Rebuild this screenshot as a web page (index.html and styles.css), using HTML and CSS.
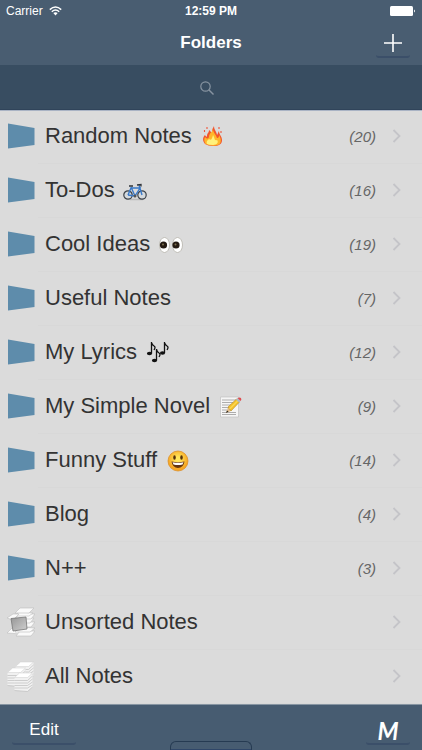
FILE: index.html
```html
<!DOCTYPE html>
<html lang="en">
<head>
  <meta charset="UTF-8">
  <meta name="viewport" content="width=device-width, initial-scale=1.0">
  <title>Folders</title>
  <link rel="stylesheet" href="styles.css">
</head>
<body>
  <!-- shared icons -->
  <svg class="defs" width="0" height="0" aria-hidden="true">
    <symbol id="folder" viewBox="0 0 28 28">
      <path d="M1 1.5 L27.5 6 V23 L1 26.5Z" fill="#5e8cab"/>
    </symbol>
    <symbol id="chevron" viewBox="0 0 10 16">
      <path d="M1.5 2 L7.5 8 L1.5 14" fill="none" stroke="#c4c4c8" stroke-width="1.8"/>
    </symbol>
    <symbol id="sheets" viewBox="0 0 19 20">
      <path d="M.5 5 V18.500 L13.500 19.500 L18.500 15 V1Z" fill="#f1f1f1"/>
      <path d="M.5 8.500H13.500L18.500 4M.5 11H13.500L18.500 7M.5 13.500H13.500L18.500 10M.5 16H13.500L18.500 13M.5 18.500L13.500 19.500L18.500 15" fill="none" stroke="#bdbdbd" stroke-width=".7"/>
      <path d="M5.500 1H18.500L13.500 5.500H.5Z" fill="#fff" stroke="#cfcfcf" stroke-width=".5"/>
    </symbol>
  </svg>

  <div class="app">
    <header class="header">
      <div class="status">
        <div class="carrier">
          Carrier
          <svg width="13" height="10" viewBox="0 0 13 10">
            <path d="M.8 3.600Q6.500 -1.600 12.200 3.600M2.800 5.700Q6.500 2.300 10.200 5.700" fill="none" stroke="#fff" stroke-width="1.500"/>
            <path d="M4.300 7.100Q6.500 5.200 8.700 7.100L6.500 9.500Z" fill="#fff"/>
          </svg>
        </div>
        <div class="time">12:59 PM</div>
        <svg class="battery" width="26" height="10" viewBox="0 0 26 10">
          <rect width="23" height="10" rx="1.500" fill="#fff"/>
          <path d="M24 3.500Q26 5 24 6.500Z" fill="#fff"/>
        </svg>
      </div>
      <div class="nav">
        <h1>Folders</h1>
        <button class="bar-button add" aria-label="Add folder">
          <svg width="18" height="18" viewBox="0 0 18 18"><path d="M9 0V18M0 9H18" stroke="#fff" stroke-width="1.600"/></svg>
        </button>
      </div>
    </header>

    <label class="search">
      <input type="search" aria-label="Search">
      <svg width="14" height="14" viewBox="0 0 14 14"><circle cx="5.500" cy="5.500" r="4.700" fill="none" stroke="#8794a1" stroke-width="1.200"/><path d="M9 9L13.500 13.500" stroke="#8794a1" stroke-width="1.400"/></svg>
    </label>

    <ul class="folders">
      <li><a href="#">
        <svg class="icon"><use href="#folder"/></svg>
        <span class="name">Random Notes
          <svg class="emoji" viewBox="0 0 26 26">
            <path d="M5 21C2 17 3 14 5 12C6 14 7 14 7 13C7 10 9 10 9 7C11 8 11 10 12 10C12 6 13 5 14 3C14 7 17 9 17 12C18 11 18 9 19 8C19 12 22 13 22 17C22 21 19 23 13 23Q8 23 5 21Z" fill="#f2552c"/>
            <path d="M5.500 21C4 18 4 16 5 14C7 16 8 16 9 14C9 10 12 10 13 6C13 10 16 11 17 15C19 15 19 13 19 12C22 17 21 21 18 22Q12 24 5.500 21Z" fill="#ffb62a"/>
            <path d="M7 21C6 18 8 17 9 16C11 18 12 16 13 12C15 15 14 18 17 17C19 19 17 22 13 22Q9 22 7 21Z" fill="#fff27c"/>
            <path d="M4.500 7V9M7 4V6M19 4V6M21 8V10" stroke="#ef563b" stroke-width="1.100"/>
          </svg>
        </span>
        <span class="count">(20)</span>
        <svg class="chevron"><use href="#chevron"/></svg>
      </a></li>
      <li><a href="#">
        <svg class="icon"><use href="#folder"/></svg>
        <span class="name">To-Dos
          <svg class="emoji" viewBox="0 0 26 26">
            <path d="M7 22.500H20" stroke="#bbb" stroke-width="1.500"/>
            <g fill="#d5dade" stroke="#3b4148" stroke-width="1.200"><circle cx="5" cy="18" r="4.200"/><circle cx="19" cy="18" r="4.200"/></g>
            <path d="M5 18L8 11H17L12 19L8 10M5 18L12 19M19 18L16 8" fill="none" stroke="#3979c9" stroke-width="1.400"/>
            <path d="M6 9H10M14 8L18 7.500V9.500" fill="none" stroke="#30343a" stroke-width="1.300"/>
            <circle cx="12" cy="19" r="1.500" fill="#555"/>
          </svg>
        </span>
        <span class="count">(16)</span>
        <svg class="chevron"><use href="#chevron"/></svg>
      </a></li>
      <li><a href="#">
        <svg class="icon"><use href="#folder"/></svg>
        <span class="name">Cool Ideas
          <svg class="emoji" viewBox="0 0 26 26">
            <g fill="#fff" stroke="#b5b2aa" stroke-width=".8"><ellipse cx="6.500" cy="14" rx="5" ry="7.500"/><ellipse cx="19.500" cy="14" rx="5" ry="7.500"/></g>
            <g fill="#241a12"><circle cx="5.500" cy="14" r="3.600"/><circle cx="18" cy="14" r="3.600"/></g>
            <g fill="#7d7150"><circle cx="5" cy="13.500" r="1"/><circle cx="17.500" cy="13.500" r="1"/></g>
          </svg>
        </span>
        <span class="count">(19)</span>
        <svg class="chevron"><use href="#chevron"/></svg>
      </a></li>
      <li><a href="#">
        <svg class="icon"><use href="#folder"/></svg>
        <span class="name">Useful Notes</span>
        <span class="count">(7)</span>
        <svg class="chevron"><use href="#chevron"/></svg>
      </a></li>
      <li><a href="#">
        <svg class="icon"><use href="#folder"/></svg>
        <span class="name">My Lyrics
          <svg class="emoji" viewBox="0 0 26 26">
            <g fill="#111"><ellipse cx="4.500" cy="14.500" rx="2.600" ry="1.800"/><ellipse cx="9.500" cy="21.500" rx="2.600" ry="1.800"/><ellipse cx="17.500" cy="14" rx="2.600" ry="1.800"/></g>
            <path d="M6.500 14.500V3Q7 6 9 7T9 11M11.500 21.500V10Q12 13 14 14T14 18M19.500 14V3Q20 6 22 7T22 11" fill="none" stroke="#111" stroke-width="1.300"/>
          </svg>
        </span>
        <span class="count">(12)</span>
        <svg class="chevron"><use href="#chevron"/></svg>
      </a></li>
      <li><a href="#">
        <svg class="icon"><use href="#folder"/></svg>
        <span class="name">My Simple Novel
          <svg class="emoji" viewBox="0 0 26 26">
            <path d="M2.500 4H20.500V24H2.500Z" fill="#f6f6f6" stroke="#c2c2c2" stroke-width=".7"/>
            <path d="M4 7H18M4 9.500H17M4 12H14M4 14.500H12M4 17H9M4 19.500H18M4 21.500H18" stroke="#a5a5a5" stroke-width=".9"/>
            <path d="M8 20L10 14L13 18Z" fill="#e3bd8a"/><path d="M8 20L9 17.500L10.500 18.800Z" fill="#222"/>
            <path d="M10 14L18.500 6L21.500 9L13 18Z" fill="#f5c32c" stroke="#a77b13" stroke-width=".5"/>
            <path d="M11.500 16L20 7.500" stroke="#ffe76a"/>
            <path d="M18 6.500L19.500 5L22.500 8L21 9.500Z" fill="#aebbc4"/>
            <path d="M19.500 5Q21.500 4 23 5Q24 7 22.500 8Z" fill="#df4d50"/>
          </svg>
        </span>
        <span class="count">(9)</span>
        <svg class="chevron"><use href="#chevron"/></svg>
      </a></li>
      <li><a href="#">
        <svg class="icon"><use href="#folder"/></svg>
        <span class="name">Funny Stuff
          <svg class="emoji" viewBox="0 0 26 26">
            <defs><radialGradient id="face" cy=".4"><stop offset=".2" stop-color="#ffe65c"/><stop offset="1" stop-color="#f6a623"/></radialGradient></defs>
            <circle cx="13" cy="14" r="10" fill="url(#face)" stroke="#db8b20" stroke-width=".7"/>
            <ellipse cx="9.500" cy="10.500" rx="1.300" ry="2.300" fill="#56320d"/><ellipse cx="16.500" cy="10.500" rx="1.300" ry="2.300" fill="#56320d"/>
            <path d="M6.500 14.500Q13 16 19.500 14.500Q18.500 21 13 21T6.500 14.500Z" fill="#66350e"/>
            <path d="M7.500 15.200Q13 16.500 18.500 15.200L17.500 17.500Q13 18.500 8.500 17.500Z" fill="#fff"/>
          </svg>
        </span>
        <span class="count">(14)</span>
        <svg class="chevron"><use href="#chevron"/></svg>
      </a></li>
      <li><a href="#">
        <svg class="icon"><use href="#folder"/></svg>
        <span class="name">Blog</span>
        <span class="count">(4)</span>
        <svg class="chevron"><use href="#chevron"/></svg>
      </a></li>
      <li><a href="#">
        <svg class="icon"><use href="#folder"/></svg>
        <span class="name">N++</span>
        <span class="count">(3)</span>
        <svg class="chevron"><use href="#chevron"/></svg>
      </a></li>
      <li><a href="#">
        <svg class="icon" viewBox="0 0 28 32">
          <defs><linearGradient id="photo" x2="1" y2="1"><stop stop-color="#969696"/><stop offset="1" stop-color="#d0d0d0"/></linearGradient></defs>
          <g fill="#fafafa" stroke="#bdbdbd" stroke-width=".6">
            <path d="M0 27L5 22L17 25L14 28Z"/>
            <path d="M13 25H28L24 30H9Z"/><path d="M13 21L28 22L23 26H8Z"/>
            <path d="M13 16H28L24 21H9Z"/><path d="M12 13L27 12L23 17H8Z"/>
            <path d="M12 8H28L24 13H8Z"/><path d="M12 6L26 7L22 10H8Z"/>
            <path d="M13 2H27L22 7H8Z"/><path d="M0 12L6 8H12L6 14Z"/>
          </g>
          <path d="M4 12.500L19 11L20 23L6 25Z" fill="url(#photo)" stroke="#777" stroke-width=".8"/>
        </svg>
        <span class="name">Unsorted Notes</span>
        <svg class="chevron"><use href="#chevron"/></svg>
      </a></li>
      <li><a href="#">
        <svg class="icon" viewBox="0 0 28 32">
          <use href="#sheets" x="8" y="1" width="19" height="20"/>
          <use href="#sheets" x="0" y="7" width="19" height="20"/>
          <use href="#sheets" x="7" y="12" width="19" height="20"/>
        </svg>
        <span class="name">All Notes</span>
        <svg class="chevron"><use href="#chevron"/></svg>
      </a></li>
    </ul>

    <footer class="footer">
      <button class="bar-button edit">Edit</button>
      <div class="handle"></div>
      <button class="bar-button menu">M</button>
    </footer>
  </div>
</body>
</html>
```
FILE: styles.css
```css
* {
  box-sizing: border-box;
}

body {
  margin: 0;
  font-family: "Liberation Sans", Arial, sans-serif;
  background-color: #dbdbdb;
  color: #333;
}

.defs {
  position: absolute;
}

.app {
  display: flex;
  flex-direction: column;
  min-height: 100vh;
}

.header {
  background-color: #495d71;
  color: #fff;
}

.status {
  display: grid;
  grid-template-columns: 1fr auto 1fr;
  align-items: center;
  height: 22px;
  padding: 0 6px;
  font-size: 12px;
}

.carrier {
  display: flex;
  align-items: center;
  gap: 6px;
}

.time {
  font-weight: bold;
}

.battery {
  justify-self: end;
}

.nav {
  display: grid;
  grid-template-columns: 1fr auto 1fr;
  height: 43px;
  padding: 0 12px;
}

h1 {
  grid-column: 2;
  margin: 0;
  font-size: 17px;
  line-height: 42px;
}

.bar-button {
  display: flex;
  align-items: center;
  justify-content: center;
  height: 36px;
  padding: 0;
  border: none;
  border-bottom: 2px solid #3b4f69;
  border-radius: 3px;
  background: none;
  color: #fff;
  font-family: inherit;
  font-size: 17px;
  cursor: pointer;
}

.add {
  justify-self: end;
  width: 34px;
  padding-top: 8px;
}

.search {
  position: relative;
  height: 45px;
  background-color: #384d61;
  border-bottom: 1px solid #30445a;
}

.search input {
  width: 100%;
  height: 100%;
  padding: 0 12px;
  border: none;
  outline: none;
  background: none;
  color: #fff;
  font-size: 15px;
  text-align: center;
}

.search svg {
  position: absolute;
  top: 16px;
  left: calc(50% - 11px);
}

.folders {
  flex: 1;
  margin: 0 0 -1px;
  padding: 0;
  list-style: none;
  border-top: 1px solid #a9b3c4;
}

.folders a {
  display: flex;
  align-items: center;
  height: 54px;
  padding: 0 20px 4px 7px;
  color: inherit;
  text-decoration: none;
}

.folders li {
  background: linear-gradient(#d8d8d8, #d8d8d8) 38px 52px / 100% 1px no-repeat;
}

.icon {
  width: 28px;
  height: 32px;
  margin-right: 10px;
}

.name {
  display: flex;
  flex: 1;
  align-items: center;
  gap: 8px;
  font-size: 22px;
  line-height: 26px;
  white-space: nowrap;
}

.emoji {
  width: 26px;
  height: 26px;
}

.count {
  margin-right: 16px;
  color: #666;
  font-size: 15px;
  font-style: italic;
}

.chevron {
  width: 10px;
  height: 16px;
}

.footer {
  display: grid;
  grid-template-columns: 1fr auto 1fr;
  height: 46px;
  padding: 0 12px;
  background-color: #475c71;
  border-top: 1px solid #8795a2;
  position: relative;
}

.footer .bar-button {
  height: 40px;
  padding-top: 12px;
}

.edit {
  width: 64px;
}

.handle {
  align-self: end;
  width: 82px;
  height: 9px;
  border: 1px solid #263b52;
  border-bottom: none;
  border-radius: 6px 6px 0 0;
  background: linear-gradient(#475c71 7px, #2f4668 7px);
}

.footer .menu {
  justify-self: end;
  width: 44px;
  font-family: Lato, sans-serif;
  font-size: 24px;
  font-style: italic;
  font-weight: bold;
}
```
